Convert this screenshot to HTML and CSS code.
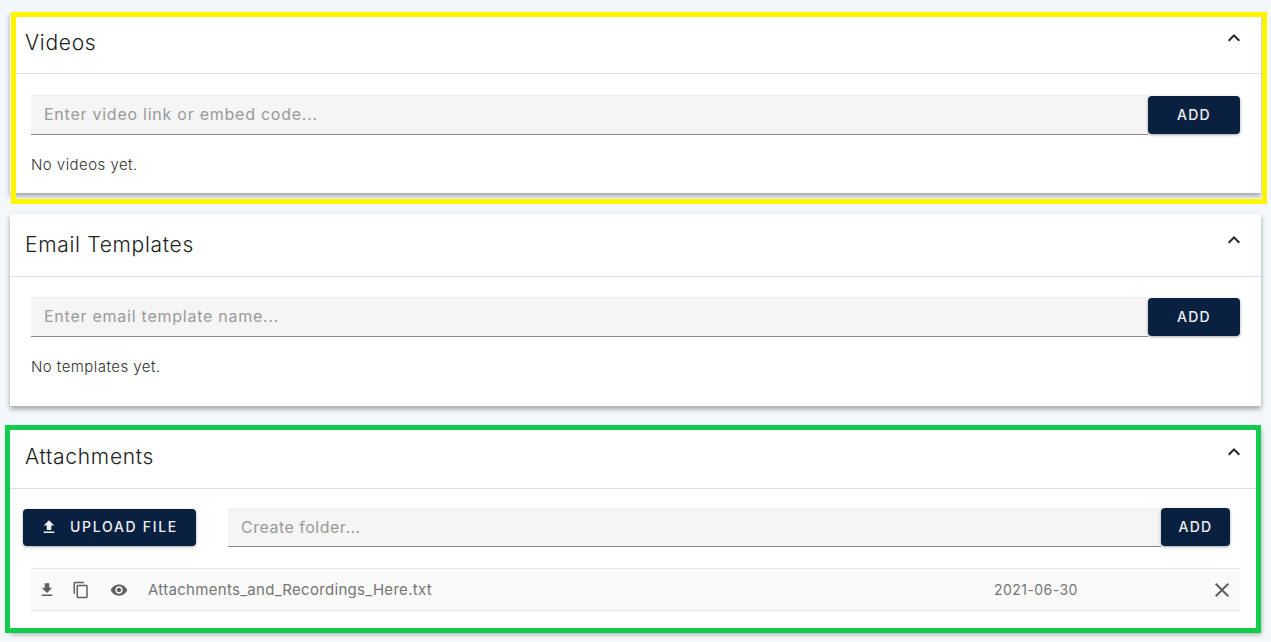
FILE: index.html
```html
<!DOCTYPE html>
<html lang="en">
<head>
    <meta charset="UTF-8">
    <meta name="viewport" content="width=device-width, initial-scale=1.0">
    <title>Videos, Templates and Attachments</title>
    <link rel="stylesheet" href="styles.css">
</head>
<body>
    <div class="page">
        <section class="panel panel-videos">
            <header class="panel-header">
                <h2>Videos</h2>
                <svg class="chevron" viewBox="0 0 24 24"><path d="M12 8l-6 6 1.41 1.41L12 10.83l4.59 4.58L18 14z"/></svg>
            </header>
            <div class="panel-body">
                <div class="add-row">
                    <input type="text" class="text-input" placeholder="Enter video link or embed code...">
                    <button type="button" class="btn btn-add">ADD</button>
                </div>
                <p class="empty-note">No videos yet.</p>
            </div>
        </section>

        <section class="panel panel-templates">
            <header class="panel-header">
                <h2>Email Templates</h2>
                <svg class="chevron" viewBox="0 0 24 24"><path d="M12 8l-6 6 1.41 1.41L12 10.83l4.59 4.58L18 14z"/></svg>
            </header>
            <div class="panel-body">
                <div class="add-row">
                    <input type="text" class="text-input" placeholder="Enter email template name...">
                    <button type="button" class="btn btn-add">ADD</button>
                </div>
                <p class="empty-note">No templates yet.</p>
            </div>
        </section>

        <section class="panel panel-attachments">
            <header class="panel-header">
                <h2>Attachments</h2>
                <svg class="chevron" viewBox="0 0 24 24"><path d="M12 8l-6 6 1.41 1.41L12 10.83l4.59 4.58L18 14z"/></svg>
            </header>
            <div class="attachments-body">
                <div class="attachments-tools">
                    <button type="button" class="btn btn-upload">
                        <svg class="upload-icon" viewBox="0 0 24 24"><path d="M9 16h6v-6h4l-7-7-7 7h4zm-4 2h14v2H5z"/></svg>
                        UPLOAD FILE
                    </button>
                    <div class="add-row folder-row">
                        <input type="text" class="text-input" placeholder="Create folder...">
                        <button type="button" class="btn btn-add btn-add-small">ADD</button>
                    </div>
                </div>
                <div class="file-row">
                    <svg class="file-icon icon-download" viewBox="0 0 24 24"><path d="M19 9h-4V3H9v6H5l7 7 7-7zM5 18v2h14v-2H5z"/></svg>
                    <svg class="file-icon icon-copy" viewBox="0 0 24 24"><path d="M16 1H4c-1.1 0-2 .9-2 2v14h2V3h12V1zm3 4H8c-1.1 0-2 .9-2 2v14c0 1.1.9 2 2 2h11c1.1 0 2-.9 2-2V7c0-1.1-.9-2-2-2zm0 16H8V7h11v14z"/></svg>
                    <svg class="file-icon icon-view" viewBox="0 0 24 24"><path d="M12 4.5C7 4.5 2.73 7.61 1 12c1.73 4.39 6 7.5 11 7.5s9.27-3.11 11-7.5c-1.73-4.39-6-7.5-11-7.5zM12 17c-2.76 0-5-2.24-5-5s2.24-5 5-5 5 2.24 5 5-2.24 5-5 5zm0-8c-1.66 0-3 1.34-3 3s1.34 3 3 3 3-1.34 3-3-1.34-3-3-3z"/></svg>
                    <span class="file-name">Attachments_and_Recordings_Here.txt</span>
                    <span class="file-date">2021-06-30</span>
                    <svg class="file-remove" viewBox="0 0 24 24"><path d="M19 6.41L17.59 5 12 10.59 6.41 5 5 6.41 10.59 12 5 17.59 6.41 19 12 13.41 17.59 19 19 17.59 13.41 12z"/></svg>
                </div>
            </div>
        </section>

        <!-- Marcadores coloridos por cima dos paineis -->
        <div class="highlight highlight-yellow"></div>
        <div class="highlight highlight-green"></div>
    </div>
</body>
</html>
```

FILE: styles.css
```css
* {
    margin: 0;
    padding: 0;
    box-sizing: border-box;
    font-family: Inter, "Open Sans", Arial, sans-serif;
}

body {
    background: #f4f8fa;
    color: #212121;
}

.page {
    position: relative;
    height: 642px;
    padding: 12px 10px 0;
    overflow: hidden;
}

.panel {
    width: 1251px;
    background: #fff;
    box-shadow: 0 3px 5px rgba(0, 0, 0, 0.35);
}

.panel-templates {
    margin-top: 21px;
}

.panel-attachments {
    margin-top: 20px;
    height: 205px;
}

.panel-header {
    display: flex;
    justify-content: space-between;
    align-items: center;
    height: 62px;
    padding: 0 15px;
    border-bottom: 1px solid #e0e0e0;
}

.panel-templates .panel-header,
.panel-attachments .panel-header {
    height: 63px;
    padding-bottom: 1px;
}

.panel-header h2 {
    font-size: 21px;
    font-weight: 300;
    letter-spacing: 0.7px;
}

.chevron {
    width: 24px;
    height: 24px;
    align-self: flex-start;
    margin-top: 14px;
    fill: #212121;
}

.panel-body {
    padding: 21px 21px 18px;
}

.panel-templates .panel-body {
    padding: 20px 21px 29px;
}

.add-row {
    display: flex;
    align-items: flex-end;
}

.text-input {
    flex: 1;
    min-width: 0;
    height: 40px;
    padding: 0 13px 2px;
    border: none;
    border-top: 1px solid #ececec;
    border-bottom: 1px solid #8a8a8a;
    background: #f5f5f5;
    font-size: 16px;
    letter-spacing: 0.75px;
    outline: none;
}

.text-input::placeholder {
    color: #9a9a9a;
    opacity: 1;
}

.btn {
    border: none;
    border-radius: 4px;
    background: #0a2040;
    color: #eef0f3;
    font-size: 14px;
    font-weight: 500;
    letter-spacing: 1.25px;
    box-shadow: 0 1px 3px rgba(0, 0, 0, 0.35);
}

.btn-add {
    width: 92px;
    height: 38px;
    margin-bottom: 1px;
    padding-bottom: 2px;
}

.btn-add-small {
    width: 69px;
}

.empty-note {
    margin-top: 19px;
    font-size: 15px;
    font-weight: 300;
    line-height: 21px;
    letter-spacing: 0.45px;
    color: #333;
}

.attachments-body {
    padding: 19px 21px 0 13px;
}

.attachments-tools {
    display: flex;
    align-items: center;
    gap: 32px;
    padding-right: 10px;
}

.attachments-tools .text-input {
    height: 39px;
    letter-spacing: 0.5px;
}

.btn-upload {
    display: flex;
    align-items: center;
    gap: 12px;
    flex: none;
    width: 173px;
    height: 37px;
    padding: 0 0 2px 17px;
    letter-spacing: 1.7px;
}

.upload-icon {
    width: 18px;
    height: 18px;
    fill: #eef0f3;
}

.folder-row {
    flex: 1;
    min-width: 0;
}

.file-row {
    display: flex;
    align-items: center;
    height: 43px;
    margin: 21px 0 0 8px;
    padding-left: 7px;
    border-top: 1px solid #e5e5e5;
    border-bottom: 1px solid #e5e5e5;
    background: #fafafa;
    font-size: 14px;
    color: #757575;
}

.file-icon {
    flex: none;
    width: 18px;
    height: 18px;
    fill: #5f5f5f;
}

.icon-copy {
    margin-left: 16px;
}

.icon-view {
    margin-left: 20px;
}

.file-name {
    width: 846px;
    margin-left: 20px;
    padding-bottom: 1px;
    font-size: 15px;
    letter-spacing: 0.3px;
}

.file-date {
    width: 84px;
    padding-bottom: 1px;
    letter-spacing: 0.45px;
}

.file-remove {
    flex: none;
    width: 24px;
    height: 24px;
    margin-left: 132px;
    fill: #5f5f5f;
}

.highlight {
    position: absolute;
    width: 1256px;
    border: 5px solid;
    pointer-events: none;
}

.highlight-yellow {
    left: 11px;
    top: 12px;
    height: 192px;
    border-color: #fff500;
}

.highlight-green {
    left: 5px;
    top: 425px;
    height: 208px;
    border-color: #12cc4e;
}
```
